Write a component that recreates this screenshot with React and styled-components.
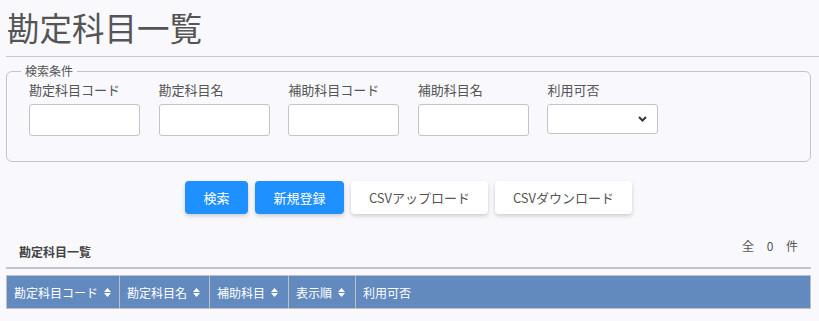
import React from "react";
import styled, { createGlobalStyle } from "styled-components";

const GlobalStyle = createGlobalStyle`
  body {
    margin: 0;
    background: #f8f8fd;
    font-family: "Noto Sans CJK JP", "Noto Sans", sans-serif;
    color: #555;
  }
`;

const Page = styled.div`
  padding: 0 8px 0 6px;
`;

const Title = styled.h1`
  margin: 0 -8px 0 0;
  padding: 4px 0 0 1px;
  height: 52px;
  font-size: 32.5px;
  font-weight: 400;
  line-height: 46px;
  color: #555;
  border-bottom: 1px solid #c8c8cc;
`;

const Fieldset = styled.fieldset`
  margin: 8px 0 0;
  padding: 6px 20px 25px 22px;
  border: 1px solid #c4c4c8;
  border-radius: 6px;
  display: flex;
  gap: 18.6px;
`;

const Legend = styled.legend`
  margin-left: -8px;
  padding: 0 4px;
  font-size: 12px;
  line-height: 12px;
  color: #555;
`;

const Field = styled.label`
  display: flex;
  flex-direction: column;
  gap: 7px;
  font-size: 13px;
  line-height: 14px;
  color: #555;
`;

const Input = styled.div`
  width: 99px;
  height: ${(p) => p.$h || 30}px;
  padding-right: 10px;
  background: #fff;
  border: 1px solid #c4c4c8;
  border-radius: 3px;
  display: flex;
  align-items: center;
  justify-content: flex-end;
`;

const Buttons = styled.div`
  display: flex;
  justify-content: center;
  gap: 7px;
  margin-top: 19px;
`;

const Button = styled.div`
  height: 33px;
  width: ${(p) => p.$w}px;
  border-radius: 4px;
  display: flex;
  align-items: center;
  justify-content: center;
  font-size: 13px;
  background: ${(p) => (p.$primary ? "#1e90ff" : "#fff")};
  color: ${(p) => (p.$primary ? "#fff" : "#555")};
  box-shadow: 0 2px 4px rgba(0, 0, 0, 0.18);
`;

const ListHead = styled.div`
  display: flex;
  justify-content: space-between;
  align-items: center;
  margin-top: 22px;
  padding: 0 13px;
  height: 31px;
  border-bottom: 2px solid #c4c4c8;
`;

const ListTitle = styled.div`
  font-size: 12px;
  font-weight: 700;
  color: #444;
`;

const Count = styled.div`
  font-size: 12px;
  color: #555;
  word-spacing: 10px;
  padding-bottom: 12px;
`;

const Table = styled.div`
  margin-top: 6px;
  display: flex;
  height: 34px;
  background: #628abf;
  border: 1px solid #c0c0c4;
  box-sizing: border-box;
`;

const Th = styled.div`
  width: ${(p) => (p.$w ? `${p.$w}px` : "auto")};
  flex: ${(p) => (p.$w ? "none" : 1)};
  display: flex;
  align-items: center;
  gap: 6px;
  padding-left: 7px;
  box-sizing: border-box;
  font-size: 12px;
  color: #fff;
  border-right: ${(p) => (p.$last ? "none" : "1px solid #c0c0c4")};
`;

const SortIcon = () => (
  <svg width="7" height="9" viewBox="0 0 7 9">
    <path d="M3.5 0 L7 4 H0 Z M0 5 H7 L3.5 9 Z" fill="#fff" />
  </svg>
);

const Chevron = () => (
  <svg width="9" height="6" viewBox="0 0 9 6">
    <path d="M1 1 L4.5 4.5 L8 1" stroke="#334" strokeWidth="2" fill="none" />
  </svg>
);

const fields = ["勘定科目コード", "勘定科目名", "補助科目コード", "補助科目名"];

const columns = [
  { label: "勘定科目コード", w: 113, sort: true },
  { label: "勘定科目名", w: 90, sort: true },
  { label: "補助科目", w: 79, sort: true },
  { label: "表示順", w: 67, sort: true },
  { label: "利用可否" },
];

export default function App() {
  return (
    <Page>
      <GlobalStyle />
      <Title>勘定科目一覧</Title>
      <Fieldset>
        <Legend>検索条件</Legend>
        {fields.map((f) => (
          <Field key={f}>
            {f}
            <Input />
          </Field>
        ))}
        <Field>
          利用可否
          <Input $h={28}>
            <Chevron />
          </Input>
        </Field>
      </Fieldset>
      <Buttons>
        <Button $primary $w={63}>検索</Button>
        <Button $primary $w={89}>新規登録</Button>
        <Button $w={137}>CSVアップロード</Button>
        <Button $w={137}>CSVダウンロード</Button>
      </Buttons>
      <ListHead>
        <ListTitle>勘定科目一覧</ListTitle>
        <Count>全 0 件</Count>
      </ListHead>
      <Table>
        {columns.map((c, i) => (
          <Th key={c.label} $w={c.w} $last={i === columns.length - 1}>
            {c.label}
            {c.sort && <SortIcon />}
          </Th>
        ))}
      </Table>
    </Page>
  );
}
